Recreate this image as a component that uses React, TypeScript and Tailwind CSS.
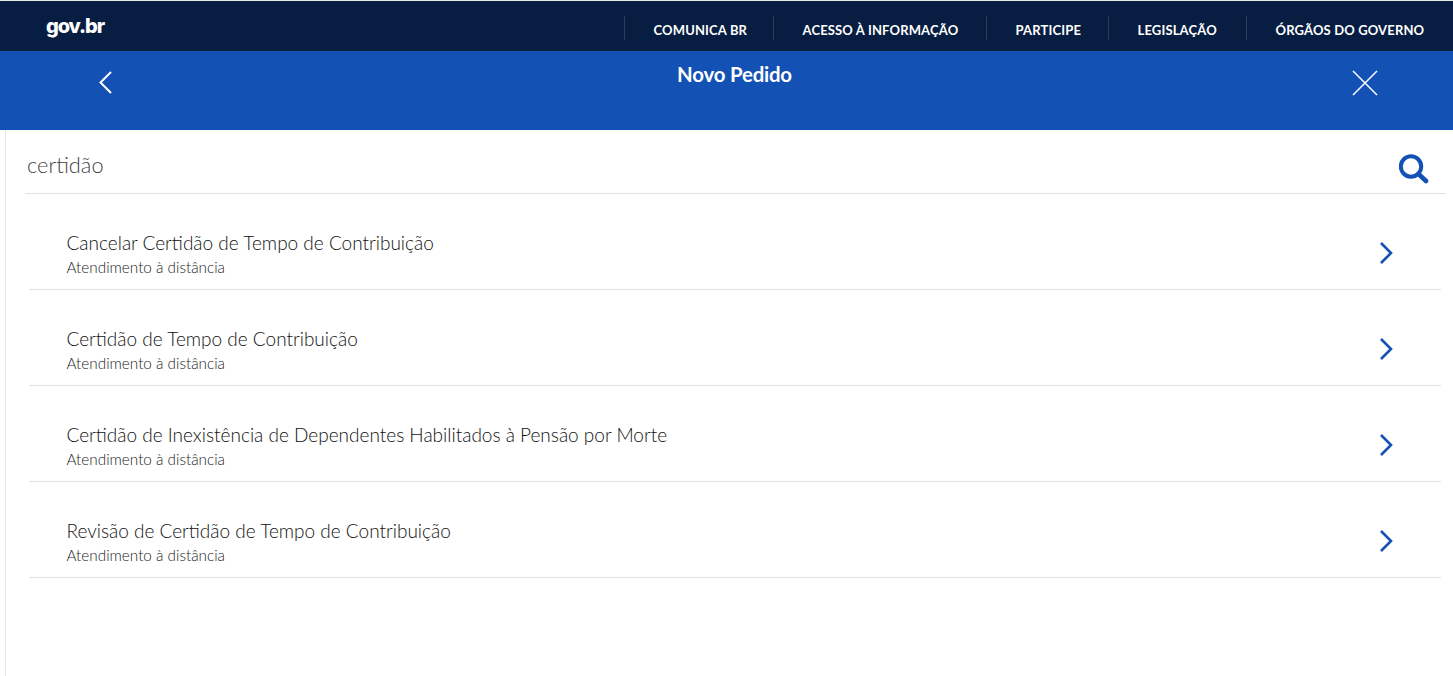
const navLinks = [
  { label: "COMUNICA BR", width: "w-[149px]" },
  { label: "ACESSO À INFORMAÇÃO", width: "w-[213px]" },
  { label: "PARTICIPE", width: "w-[122px]" },
  { label: "LEGISLAÇÃO", width: "w-[138px]" },
  { label: "ÓRGÃOS DO GOVERNO", width: "w-[207px]" },
];

const services = [
  "Cancelar Certidão de Tempo de Contribuição",
  "Certidão de Tempo de Contribuição",
  "Certidão de Inexistência de Dependentes Habilitados à Pensão por Morte",
  "Revisão de Certidão de Tempo de Contribuição",
];

const App = () => {
  return (
    <div className="h-[676px] overflow-hidden bg-white font-['Lato',sans-serif]">
      {/* Top gov bar */}
      <header className="flex h-[51px] items-center justify-between border-t border-[#e8e8e4] bg-[#071d41] pl-[46px]">
        <span className="mt-[-1px] font-['Inter',sans-serif] text-[20px] font-extrabold tracking-[-1.1px] text-white">
          gov.br
        </span>
        <nav className="flex h-full items-center pt-[14px] pb-[11px]">
          {navLinks.map((link) => (
            <a
              key={link.label}
              className={`flex h-[24px] ${link.width} items-center border-l border-[#2c3e5c] pt-[6px] pl-[28.5px] text-[13px] font-bold tracking-[0.15px] whitespace-nowrap text-white`}
            >
              {link.label}
            </a>
          ))}
        </nav>
      </header>

      {/* Page title */}
      <div className="flex h-[79px] items-start justify-between bg-[#1351b4] pr-[74px] pl-[98px]">
        <svg width="16" height="24" viewBox="0 0 16 24" className="mt-[19px]" fill="none" stroke="white" strokeWidth="2">
          <path d="M13 2 2.5 12.5 13 23" />
        </svg>
        <h1 className="mt-[10px] ml-[4px] text-[20.4px] leading-[26px] font-bold tracking-[-0.2px] text-white">Novo Pedido</h1>
        <svg width="28" height="28" viewBox="0 0 28 28" className="mt-[18px]" fill="none" stroke="white" strokeWidth="1.5">
          <path d="M2 2 26 26M26 2 2 26" />
        </svg>
      </div>

      {/* Results */}
      <main className="ml-[5px] h-[546px] border-l border-[#e6e6e6] pr-[7px]">
        <div className="ml-[19px] flex h-[64px] items-center justify-between border-b border-[#e2e2e2] pr-[17px] pl-[2px]">
          <span className="mt-[7px] text-[21.8px] font-light text-[#444444]">certidão</span>
          <svg width="30" height="30" viewBox="0 0 30 30" className="mt-[14px]" fill="none" stroke="#1351b4">
            <circle cx="12" cy="12.5" r="10.2" strokeWidth="4" />
            <path d="M19.5 20 27 27" strokeWidth="4.6" strokeLinecap="round" />
          </svg>
        </div>

        <ul className="mr-[5px] ml-[23px]">
          {services.map((title) => (
            <li
              key={title}
              className="flex h-[96px] items-end justify-between border-b border-[#e2e2e2] pr-[47px] pb-[12px] pl-[37.5px]"
            >
              <div>
                <p className="relative top-[-1px] text-[19px] leading-[24px] font-light text-[#111111]">{title}</p>
                <p className="mt-[1px] text-[15.3px] leading-[20px] font-light text-[#222222]">Atendimento à distância</p>
              </div>
              <svg width="16" height="24" viewBox="0 0 16 24" className="mb-[12px]" fill="none" stroke="#1351b4" strokeWidth="2.6">
                <path d="M3 2 13 12 3 22" />
              </svg>
            </li>
          ))}
        </ul>
      </main>
    </div>
  );
};

export default App;
